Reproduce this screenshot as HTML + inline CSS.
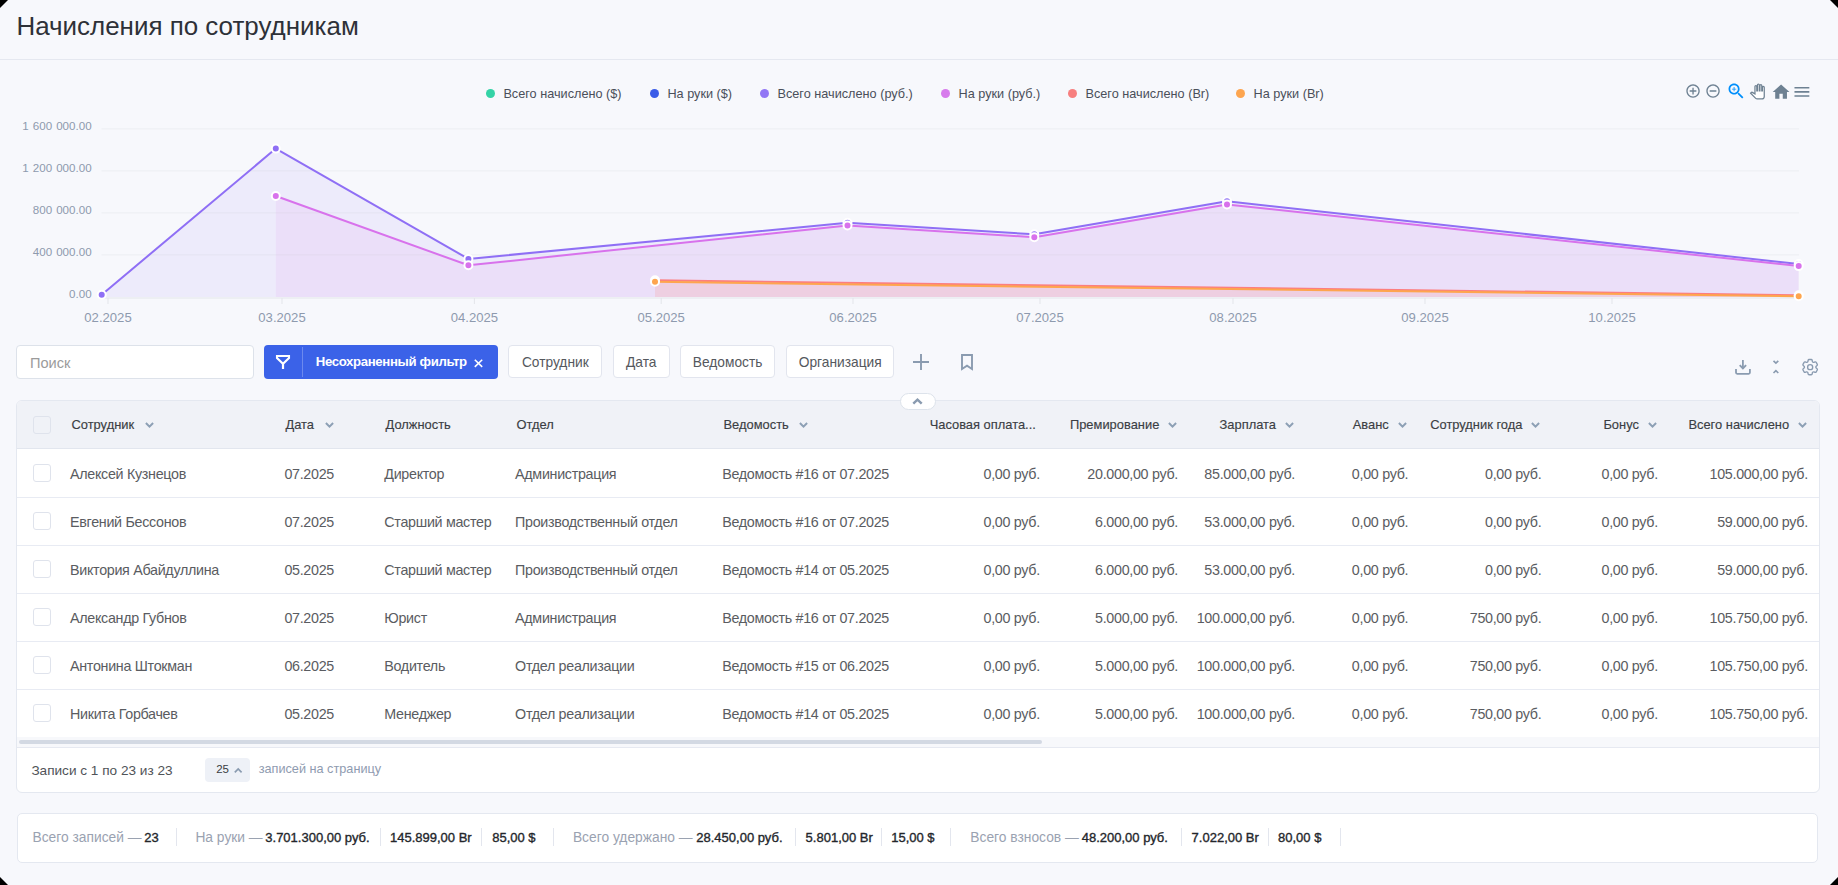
<!DOCTYPE html><html lang="ru"><head><meta charset="utf-8"><title>Начисления по сотрудникам</title>
<style>
html,body{margin:0;padding:0;}
body{width:1838px;height:885px;overflow:hidden;background:#f7f8fc;position:relative;font-family:"Liberation Sans", sans-serif;}
.t{position:absolute;line-height:20px;white-space:nowrap;}
.md{-webkit-text-stroke:0.15px currentColor;}
.sb{-webkit-text-stroke:0.35px currentColor;}
.box{position:absolute;box-sizing:border-box;}
.corner{position:absolute;width:8px;height:8px;}
svg{position:absolute;overflow:visible;}
</style></head><body>

<div class="corner" style="left:0;top:0;background:linear-gradient(135deg,#000 0,#000 45%,rgba(0,0,0,0) 55%)"></div>
<div class="corner" style="right:0;top:0;background:linear-gradient(225deg,#000 0,#000 45%,rgba(0,0,0,0) 55%)"></div>
<div class="corner" style="left:0;bottom:0;background:linear-gradient(45deg,#000 0,#000 45%,rgba(0,0,0,0) 55%)"></div>
<div class="corner" style="right:0;bottom:0;background:linear-gradient(315deg,#000 0,#000 45%,rgba(0,0,0,0) 55%)"></div>
<div class="t " style="left:16.5px;top:16.1px;font-size:25.95px;color:#2e3138;">Начисления по сотрудникам</div>
<div class="box" style="left:0;top:59px;width:1838px;height:1px;background:#e5e8f0"></div>
<div class="box" style="left:485.8px;top:88.8px;width:9.2px;height:9.2px;border-radius:50%;background:#34d3a6"></div>
<div class="t " style="left:503.4px;top:83.5px;font-size:12.7px;color:#4a4f5a;">Всего начислено ($)</div>
<div class="box" style="left:649.8px;top:88.8px;width:9.2px;height:9.2px;border-radius:50%;background:#3a5ce8"></div>
<div class="t " style="left:667.4px;top:83.5px;font-size:12.7px;color:#4a4f5a;">На руки ($)</div>
<div class="box" style="left:759.9px;top:88.8px;width:9.2px;height:9.2px;border-radius:50%;background:#9277f5"></div>
<div class="t " style="left:777.5px;top:83.5px;font-size:12.7px;color:#4a4f5a;">Всего начислено (руб.)</div>
<div class="box" style="left:940.9px;top:88.8px;width:9.2px;height:9.2px;border-radius:50%;background:#d77bec"></div>
<div class="t " style="left:958.5px;top:83.5px;font-size:12.7px;color:#4a4f5a;">На руки (руб.)</div>
<div class="box" style="left:1067.9px;top:88.8px;width:9.2px;height:9.2px;border-radius:50%;background:#f77f7f"></div>
<div class="t " style="left:1085.5px;top:83.5px;font-size:12.7px;color:#4a4f5a;">Всего начислено (Br)</div>
<div class="box" style="left:1235.9px;top:88.8px;width:9.2px;height:9.2px;border-radius:50%;background:#fda54f"></div>
<div class="t " style="left:1253.5px;top:83.5px;font-size:12.7px;color:#4a4f5a;">На руки (Br)</div>
<svg style="left:1685.30px;top:83.30px" width="16.08" height="16.08" viewBox="0 0 24 24" ><path fill="#6e8192" d="M13 7h-2v4H7v2h4v4h2v-4h4v-2h-4V7zm-1-5C6.48 2 2 6.48 2 12s4.48 10 10 10 10-4.48 10-10S17.52 2 12 2zm0 18c-4.41 0-8-3.59-8-8s3.59-8 8-8 8 3.59 8 8-3.59 8-8 8z"/></svg>
<svg style="left:1705.10px;top:83.30px" width="16.08" height="16.08" viewBox="0 0 24 24" ><path fill="#6e8192" d="M7 11v2h10v-2H7zm5-9C6.48 2 2 6.48 2 12s4.48 10 10 10 10-4.48 10-10S17.52 2 12 2zm0 18c-4.41 0-8-3.59-8-8s3.59-8 8-8 8 3.59 8 8-3.59 8-8 8z"/></svg>
<svg style="left:1726.40px;top:81.10px" width="20.40" height="20.40" viewBox="0 0 24 24" ><path fill="#008ffb" d="M15.5 14h-.79l-.28-.27C15.41 12.59 16 11.11 16 9.5 16 5.91 13.09 3 9.5 3S3 5.91 3 9.5 5.91 16 9.5 16c1.61 0 3.09-.59 4.23-1.57l.27.28v.79l5 4.99L20.49 19l-4.99-5zm-6 0C7.01 14 5 11.99 5 9.5S7.01 5 9.5 5 14 7.01 14 9.5 11.99 14 9.5 14z"/><path fill="#008ffb" d="M12 10h-2v2H9v-2H7V9h2V7h1v2h2v1z"/></svg>
<svg style="left:1750.00px;top:84.10px" width="14.88" height="14.88" viewBox="0 0 24 24" ><path fill="#fff" stroke="#6e8192" stroke-width="2" d="M23 5.5V20c0 2.2-1.8 4-4 4h-7.3c-1.08 0-2.1-.43-2.85-1.19L1 14.83s1.26-1.23 1.3-1.25c.22-.19.49-.29.79-.29.22 0 .42.06.6.16.04.01 4.31 2.46 4.31 2.46V4c0-.83.67-1.5 1.5-1.5S11 3.17 11 4v7h1V1.5c0-.83.67-1.5 1.5-1.5S15 .67 15 1.5V11h1V2.5c0-.83.67-1.5 1.5-1.5s1.5.67 1.5 1.5V11h1V5.5c0-.83.67-1.5 1.5-1.5s1.5.67 1.5 1.5z"/></svg>
<svg style="left:1771.30px;top:81.80px" width="20.16" height="20.16" viewBox="0 0 24 24" ><path fill="#6e8192" d="M10 20v-6h4v6h5v-8h3L12 3 2 12h3v8z"/></svg>
<svg style="left:1791.60px;top:82.00px" width="19.80" height="19.80" viewBox="0 0 24 24" ><path fill="#6e8192" d="M3 18h18v-2H3v2zm0-5h18v-2H3v2zm0-7v2h18V6H3z"/></svg>
<div class="t " style="right:1746.4px;top:116.0px;font-size:11.6px;color:#8e9aae;word-spacing:0.8px;">1 600 000.00</div>
<div class="t " style="right:1746.4px;top:158.1px;font-size:11.6px;color:#8e9aae;word-spacing:0.8px;">1 200 000.00</div>
<div class="t " style="right:1746.4px;top:200.1px;font-size:11.6px;color:#8e9aae;word-spacing:0.8px;">800 000.00</div>
<div class="t " style="right:1746.4px;top:242.1px;font-size:11.6px;color:#8e9aae;word-spacing:0.8px;">400 000.00</div>
<div class="t " style="right:1746.4px;top:284.1px;font-size:11.6px;color:#8e9aae;word-spacing:0.8px;">0.00</div>
<div class="t " style="left:-192.0px;width:600px;text-align:center;top:307.6px;font-size:13.1px;color:#8e9aae;">02.2025</div>
<div class="t " style="left:-18.0px;width:600px;text-align:center;top:307.6px;font-size:13.1px;color:#8e9aae;">03.2025</div>
<div class="t " style="left:174.4px;width:600px;text-align:center;top:307.6px;font-size:13.1px;color:#8e9aae;">04.2025</div>
<div class="t " style="left:361.2px;width:600px;text-align:center;top:307.6px;font-size:13.1px;color:#8e9aae;">05.2025</div>
<div class="t " style="left:553.0px;width:600px;text-align:center;top:307.6px;font-size:13.1px;color:#8e9aae;">06.2025</div>
<div class="t " style="left:740.0px;width:600px;text-align:center;top:307.6px;font-size:13.1px;color:#8e9aae;">07.2025</div>
<div class="t " style="left:933.0px;width:600px;text-align:center;top:307.6px;font-size:13.1px;color:#8e9aae;">08.2025</div>
<div class="t " style="left:1125.0px;width:600px;text-align:center;top:307.6px;font-size:13.1px;color:#8e9aae;">09.2025</div>
<div class="t " style="left:1312.0px;width:600px;text-align:center;top:307.6px;font-size:13.1px;color:#8e9aae;">10.2025</div>
<svg style="left:0;top:0" width="1838" height="340" viewBox="0 0 1838 340">
<line x1="101.5" y1="128.9" x2="1799" y2="128.9" stroke="#eceef2" stroke-width="1"/>
<line x1="101.5" y1="170.9" x2="1799" y2="170.9" stroke="#eceef2" stroke-width="1"/>
<line x1="101.5" y1="212.9" x2="1799" y2="212.9" stroke="#eceef2" stroke-width="1"/>
<line x1="101.5" y1="254.9" x2="1799" y2="254.9" stroke="#eceef2" stroke-width="1"/>
<line x1="101.5" y1="298" x2="1799" y2="298" stroke="#e3e5ea" stroke-width="1.2"/>
<line x1="108" y1="298" x2="108" y2="304" stroke="#e3e5ea" stroke-width="1"/>
<line x1="282" y1="298" x2="282" y2="304" stroke="#e3e5ea" stroke-width="1"/>
<line x1="474.4" y1="298" x2="474.4" y2="304" stroke="#e3e5ea" stroke-width="1"/>
<line x1="661.2" y1="298" x2="661.2" y2="304" stroke="#e3e5ea" stroke-width="1"/>
<line x1="853" y1="298" x2="853" y2="304" stroke="#e3e5ea" stroke-width="1"/>
<line x1="1040" y1="298" x2="1040" y2="304" stroke="#e3e5ea" stroke-width="1"/>
<line x1="1233" y1="298" x2="1233" y2="304" stroke="#e3e5ea" stroke-width="1"/>
<line x1="1425" y1="298" x2="1425" y2="304" stroke="#e3e5ea" stroke-width="1"/>
<line x1="1612" y1="298" x2="1612" y2="304" stroke="#e3e5ea" stroke-width="1"/>
<polygon points="101.7,297.0 101.7,294.7 275.8,148.6 468.4,258.9 847.5,222.8 1034.3,234.3 1227,201.3 1798.7,264 1798.7,297.0" fill="#8f6ff5" fill-opacity="0.09"/>
<polygon points="275.8,297.0 275.8,196 468.4,265.3 847.5,225.4 1034.3,237.2 1227,204.4 1798.7,266.1 1798.7,297.0" fill="#e070ec" fill-opacity="0.09"/>
<polygon points="655,297.0 655,280.3 1798.7,295.2 1798.7,297.0" fill="#fc7e80" fill-opacity="0.12"/>
<polygon points="655,297.0 655,281.8 1798.7,296.3 1798.7,297.0" fill="#fea54e" fill-opacity="0.06"/>
<polyline points="101.7,294.7 275.8,148.6 468.4,258.9 847.5,222.8 1034.3,234.3 1227,201.3 1798.7,264" fill="none" stroke="#8f6ff5" stroke-width="2" stroke-linejoin="round"/>
<polyline points="275.8,196 468.4,265.3 847.5,225.4 1034.3,237.2 1227,204.4 1798.7,266.1" fill="none" stroke="#d872ec" stroke-width="2" stroke-linejoin="round"/>
<polyline points="655,280.3 1798.7,295.2" fill="none" stroke="#fc7e80" stroke-width="2" stroke-linejoin="round"/>
<polyline points="655,281.8 1798.7,296.3" fill="none" stroke="#fea54e" stroke-width="2" stroke-linejoin="round"/>
<circle cx="101.7" cy="294.7" r="4.0" fill="#8f6ff5" stroke="#fff" stroke-width="2"/>
<circle cx="275.8" cy="148.6" r="4.0" fill="#8f6ff5" stroke="#fff" stroke-width="2"/>
<circle cx="468.4" cy="258.9" r="4.0" fill="#8f6ff5" stroke="#fff" stroke-width="2"/>
<circle cx="847.5" cy="222.8" r="4.0" fill="#8f6ff5" stroke="#fff" stroke-width="2"/>
<circle cx="1034.3" cy="234.3" r="4.0" fill="#8f6ff5" stroke="#fff" stroke-width="2"/>
<circle cx="1227" cy="201.3" r="4.0" fill="#8f6ff5" stroke="#fff" stroke-width="2"/>
<circle cx="1798.7" cy="264" r="4.0" fill="#8f6ff5" stroke="#fff" stroke-width="2"/>
<circle cx="275.8" cy="196" r="4.0" fill="#d872ec" stroke="#fff" stroke-width="2"/>
<circle cx="468.4" cy="265.3" r="4.0" fill="#d872ec" stroke="#fff" stroke-width="2"/>
<circle cx="847.5" cy="225.4" r="4.0" fill="#d872ec" stroke="#fff" stroke-width="2"/>
<circle cx="1034.3" cy="237.2" r="4.0" fill="#d872ec" stroke="#fff" stroke-width="2"/>
<circle cx="1227" cy="204.4" r="4.0" fill="#d872ec" stroke="#fff" stroke-width="2"/>
<circle cx="1798.7" cy="266.1" r="4.0" fill="#d872ec" stroke="#fff" stroke-width="2"/>
<circle cx="655" cy="280.3" r="4.0" fill="#fc7e80" stroke="#fff" stroke-width="2"/>
<circle cx="655" cy="281.8" r="4.0" fill="#fea54e" stroke="#fff" stroke-width="2"/>
<circle cx="1798.7" cy="295.2" r="4.0" fill="#fc7e80" stroke="#fff" stroke-width="2"/>
<circle cx="1798.7" cy="296.3" r="4.0" fill="#fea54e" stroke="#fff" stroke-width="2"/>
</svg>
<div class="box" style="left:16px;top:345px;width:237.5px;height:34px;background:#fff;border:1px solid #dde2ea;border-radius:4px"></div>
<div class="t " style="left:29.9px;top:353.1px;font-size:14.6px;color:#9b9b9b;">Поиск</div>
<div class="box" style="left:264px;top:345px;width:234px;height:34px;background:#3b62e8;border-radius:4px"></div>
<div class="box" style="left:302px;top:347px;width:1px;height:30px;background:rgba(255,255,255,0.25)"></div>
<svg style="left:270px;top:350px" width="30" height="25" viewBox="270 350 30 25"><path d="M277 358V356H289V358L283 363.8Z" fill="none" stroke="#fff" stroke-width="2.1" stroke-linejoin="miter"/><path d="M283 363V369" stroke="#fff" stroke-width="2.2"/></svg>
<div class="t " style="left:315.8px;top:352.3px;font-size:13.2px;color:#ffffff;font-weight:700;letter-spacing:-0.36px;">Несохраненный фильтр</div>
<svg style="left:474px;top:358.6px" width="9" height="8.6" viewBox="0 0 9 8.6"><path d="M0.8 0.7L8.2 7.9M8.2 0.7L0.8 7.9" stroke="#fff" stroke-width="1.6"/></svg>
<div class="box" style="left:508.2px;top:345.4px;width:94.2px;height:33px;background:#fff;border:1px solid #e2e5ee;border-radius:4px"></div>
<div class="t " style="left:255.3px;width:600px;text-align:center;top:352.6px;font-size:13.75px;color:#55585d;">Сотрудник</div>
<div class="box" style="left:613.0px;top:345.4px;width:56.6px;height:33px;background:#fff;border:1px solid #e2e5ee;border-radius:4px"></div>
<div class="t " style="left:341.3px;width:600px;text-align:center;top:352.6px;font-size:13.75px;color:#55585d;">Дата</div>
<div class="box" style="left:680.0px;top:345.4px;width:95.2px;height:33px;background:#fff;border:1px solid #e2e5ee;border-radius:4px"></div>
<div class="t " style="left:427.6px;width:600px;text-align:center;top:352.6px;font-size:13.75px;color:#55585d;">Ведомость</div>
<div class="box" style="left:786.0px;top:345.4px;width:108.4px;height:33px;background:#fff;border:1px solid #e2e5ee;border-radius:4px"></div>
<div class="t " style="left:540.2px;width:600px;text-align:center;top:352.6px;font-size:13.75px;color:#55585d;">Организация</div>
<svg style="left:913px;top:354px" width="16" height="16" viewBox="0 0 16 16"><path d="M8 0v16M0 8h16" stroke="#8a9bb0" stroke-width="1.9"/></svg>
<svg style="left:961px;top:354px" width="12" height="16" viewBox="0 0 12 16"><path d="M1 15V1h10v14L6 11.6z" fill="none" stroke="#8a9bb0" stroke-width="1.9" stroke-linejoin="miter"/></svg>
<svg style="left:1730px;top:355px" width="26" height="24" viewBox="1730 355 26 24"><path d="M1736 369.1V372.6Q1736 373.8 1737.2 373.8H1748.7Q1749.9 373.8 1749.9 372.6V369.1" fill="none" stroke="#8a9bb0" stroke-width="1.8"/><path d="M1742.9 360V368.4" stroke="#8a9bb0" stroke-width="1.8"/><path d="M1739.7 365.1L1742.9 368.3 1746.1 365.1" fill="none" stroke="#8a9bb0" stroke-width="1.9"/></svg>
<svg style="left:1768px;top:355px" width="16" height="24" viewBox="1768 355 16 24"><path d="M1773.5 360.9L1775.9 363.2 1778.3 360.9M1773.5 373L1775.9 370.7 1778.3 373" fill="none" stroke="#8a9bb0" stroke-width="1.65"/></svg>
<svg style="left:1799.85px;top:356.8px" width="20.3" height="20.3" viewBox="0 0 24 24"><g fill="none" stroke="#8a9bb0" stroke-width="1.6" stroke-linecap="round" stroke-linejoin="round"><path d="M9.594 3.94c.09-.542.56-.94 1.11-.94h2.593c.55 0 1.02.398 1.11.94l.213 1.281c.063.374.313.686.645.87.074.04.147.083.22.127.325.196.72.257 1.075.124l1.217-.456a1.125 1.125 0 0 1 1.37.49l1.296 2.247a1.125 1.125 0 0 1-.26 1.431l-1.003.827c-.293.241-.438.613-.43.992a7.723 7.723 0 0 1 0 .255c-.008.378.137.75.43.991l1.004.827c.424.35.534.955.26 1.43l-1.298 2.247a1.125 1.125 0 0 1-1.369.491l-1.217-.456c-.355-.133-.75-.072-1.076.124a6.47 6.47 0 0 1-.22.128c-.331.183-.581.495-.644.869l-.213 1.281c-.09.543-.56.94-1.11.94h-2.594c-.55 0-1.019-.398-1.11-.94l-.213-1.281c-.062-.374-.312-.686-.644-.87a6.52 6.52 0 0 1-.22-.127c-.325-.196-.72-.257-1.076-.124l-1.217.456a1.125 1.125 0 0 1-1.369-.49l-1.297-2.247a1.125 1.125 0 0 1 .26-1.431l1.004-.827c.292-.24.437-.613.43-.991a6.932 6.932 0 0 1 0-.255c.007-.38-.138-.751-.43-.992l-1.004-.827a1.125 1.125 0 0 1-.26-1.43l1.297-2.247a1.125 1.125 0 0 1 1.37-.491l1.216.456c.356.133.751.072 1.076-.124.072-.044.146-.086.22-.128.332-.183.582-.495.644-.869l.214-1.28Z"/><path d="M15 12a3 3 0 1 1-6 0 3 3 0 0 1 6 0Z"/></g></svg>
<div class="box" style="left:15.5px;top:400.3px;width:1804.5px;height:392.7px;background:#fff;border:1px solid #e4e8f0;border-radius:6px;overflow:hidden"><div style="position:absolute;left:0;top:0;right:0;height:46.6px;background:#f0f2f7;border-bottom:1px solid #e2e6ee"></div></div>
<div class="box" style="left:16.5px;top:497px;width:1802.5px;height:1px;background:#e8ebf3"></div>
<div class="box" style="left:16.5px;top:545px;width:1802.5px;height:1px;background:#e8ebf3"></div>
<div class="box" style="left:16.5px;top:593px;width:1802.5px;height:1px;background:#e8ebf3"></div>
<div class="box" style="left:16.5px;top:641px;width:1802.5px;height:1px;background:#e8ebf3"></div>
<div class="box" style="left:16.5px;top:689px;width:1802.5px;height:1px;background:#e8ebf3"></div>
<div class="box" style="left:16.5px;top:737px;width:1802.5px;height:9.6px;background:#f7f8fb"></div>
<div class="box" style="left:18.9px;top:739.8px;width:1023px;height:4.4px;background:#d3d9e3;border-radius:3px"></div>
<div class="box" style="left:16.5px;top:746.6px;width:1802.5px;height:1px;background:#e6e9f1"></div>
<div class="box" style="left:900.2px;top:393.1px;width:35.7px;height:16.6px;background:#fff;border:1px solid #dde3eb;border-radius:9px"></div>
<svg style="left:912px;top:398px" width="11" height="7" viewBox="0 0 11 7"><path d="M1.3 5.7L5.5 1.6 9.7 5.7" fill="none" stroke="#8a9bb0" stroke-width="2.4"/></svg>
<div class="box" style="left:33.1px;top:416.4px;width:17.8px;height:17.4px;background:#f0f2f7;border:1px solid #dfe3ec;border-radius:3px"></div>
<div class="t md" style="left:71.5px;top:415.0px;font-size:12.9px;color:#3b3e44;">Сотрудник</div>
<svg style="left:145.2px;top:422.0px" width="9" height="6" viewBox="0 0 9 6"><path d="M0.9 1L4.5 4.6 8.1 1" fill="none" stroke="#8da0b5" stroke-width="2"/></svg>
<div class="t md" style="left:285.5px;top:415.0px;font-size:12.9px;color:#3b3e44;">Дата</div>
<svg style="left:325.3px;top:422.0px" width="9" height="6" viewBox="0 0 9 6"><path d="M0.9 1L4.5 4.6 8.1 1" fill="none" stroke="#8da0b5" stroke-width="2"/></svg>
<div class="t md" style="left:385.5px;top:415.0px;font-size:12.9px;color:#3b3e44;">Должность</div>
<div class="t md" style="left:516.5px;top:415.0px;font-size:12.9px;color:#3b3e44;">Отдел</div>
<div class="t md" style="left:723.5px;top:415.0px;font-size:12.9px;color:#3b3e44;">Ведомость</div>
<svg style="left:798.9px;top:422.0px" width="9" height="6" viewBox="0 0 9 6"><path d="M0.9 1L4.5 4.6 8.1 1" fill="none" stroke="#8da0b5" stroke-width="2"/></svg>
<div class="t md" style="right:802.2px;top:415.0px;font-size:12.9px;color:#3b3e44;">Часовая оплата...</div>
<div class="t md" style="right:678.7px;top:415.0px;font-size:12.9px;color:#3b3e44;">Премирование</div>
<svg style="left:1168.0px;top:422.0px" width="9" height="6" viewBox="0 0 9 6"><path d="M0.9 1L4.5 4.6 8.1 1" fill="none" stroke="#8da0b5" stroke-width="2"/></svg>
<div class="t md" style="right:562.0px;top:415.0px;font-size:12.9px;color:#3b3e44;">Зарплата</div>
<svg style="left:1285.2px;top:422.0px" width="9" height="6" viewBox="0 0 9 6"><path d="M0.9 1L4.5 4.6 8.1 1" fill="none" stroke="#8da0b5" stroke-width="2"/></svg>
<div class="t md" style="right:449.3px;top:415.0px;font-size:12.9px;color:#3b3e44;">Аванс</div>
<svg style="left:1398.0px;top:422.0px" width="9" height="6" viewBox="0 0 9 6"><path d="M0.9 1L4.5 4.6 8.1 1" fill="none" stroke="#8da0b5" stroke-width="2"/></svg>
<div class="t md" style="right:315.6px;top:415.0px;font-size:12.9px;color:#3b3e44;">Сотрудник года</div>
<svg style="left:1531.0px;top:422.0px" width="9" height="6" viewBox="0 0 9 6"><path d="M0.9 1L4.5 4.6 8.1 1" fill="none" stroke="#8da0b5" stroke-width="2"/></svg>
<div class="t md" style="right:199.1px;top:415.0px;font-size:12.9px;color:#3b3e44;">Бонус</div>
<svg style="left:1647.6px;top:422.0px" width="9" height="6" viewBox="0 0 9 6"><path d="M0.9 1L4.5 4.6 8.1 1" fill="none" stroke="#8da0b5" stroke-width="2"/></svg>
<div class="t md" style="right:48.9px;top:415.0px;font-size:12.9px;color:#3b3e44;">Всего начислено</div>
<svg style="left:1797.7px;top:422.0px" width="9" height="6" viewBox="0 0 9 6"><path d="M0.9 1L4.5 4.6 8.1 1" fill="none" stroke="#8da0b5" stroke-width="2"/></svg>
<div class="box" style="left:33.1px;top:464.4px;width:17.8px;height:17.4px;background:#fff;border:1px solid #dfe3ec;border-radius:3px"></div>
<div class="t " style="left:70.0px;top:463.8px;font-size:14.3px;color:#5a5c61;letter-spacing:-0.3px;">Алексей Кузнецов</div>
<div class="t " style="left:284.4px;top:463.8px;font-size:14.3px;color:#5a5c61;letter-spacing:-0.3px;">07.2025</div>
<div class="t " style="left:384.3px;top:463.8px;font-size:14.3px;color:#5a5c61;letter-spacing:-0.3px;">Директор</div>
<div class="t " style="left:515.1px;top:463.8px;font-size:14.3px;color:#5a5c61;letter-spacing:-0.3px;">Администрация</div>
<div class="t " style="left:722.2px;top:463.8px;font-size:14.3px;color:#5a5c61;letter-spacing:-0.3px;">Ведомость #16 от 07.2025</div>
<div class="t " style="right:798.1px;top:463.8px;font-size:14.3px;color:#5a5c61;letter-spacing:-0.3px;">0,00 руб.</div>
<div class="t " style="right:660.0px;top:463.8px;font-size:14.3px;color:#5a5c61;letter-spacing:-0.3px;">20.000,00 руб.</div>
<div class="t " style="right:543.0px;top:463.8px;font-size:14.3px;color:#5a5c61;letter-spacing:-0.3px;">85.000,00 руб.</div>
<div class="t " style="right:429.8px;top:463.8px;font-size:14.3px;color:#5a5c61;letter-spacing:-0.3px;">0,00 руб.</div>
<div class="t " style="right:296.6px;top:463.8px;font-size:14.3px;color:#5a5c61;letter-spacing:-0.3px;">0,00 руб.</div>
<div class="t " style="right:180.1px;top:463.8px;font-size:14.3px;color:#5a5c61;letter-spacing:-0.3px;">0,00 руб.</div>
<div class="t " style="right:30.2px;top:463.8px;font-size:14.3px;color:#5a5c61;letter-spacing:-0.3px;">105.000,00 руб.</div>
<div class="box" style="left:33.1px;top:512.4px;width:17.8px;height:17.4px;background:#fff;border:1px solid #dfe3ec;border-radius:3px"></div>
<div class="t " style="left:70.0px;top:511.8px;font-size:14.3px;color:#5a5c61;letter-spacing:-0.3px;">Евгений Бессонов</div>
<div class="t " style="left:284.4px;top:511.8px;font-size:14.3px;color:#5a5c61;letter-spacing:-0.3px;">07.2025</div>
<div class="t " style="left:384.3px;top:511.8px;font-size:14.3px;color:#5a5c61;letter-spacing:-0.3px;">Старший мастер</div>
<div class="t " style="left:515.1px;top:511.8px;font-size:14.3px;color:#5a5c61;letter-spacing:-0.3px;">Производственный отдел</div>
<div class="t " style="left:722.2px;top:511.8px;font-size:14.3px;color:#5a5c61;letter-spacing:-0.3px;">Ведомость #16 от 07.2025</div>
<div class="t " style="right:798.1px;top:511.8px;font-size:14.3px;color:#5a5c61;letter-spacing:-0.3px;">0,00 руб.</div>
<div class="t " style="right:660.0px;top:511.8px;font-size:14.3px;color:#5a5c61;letter-spacing:-0.3px;">6.000,00 руб.</div>
<div class="t " style="right:543.0px;top:511.8px;font-size:14.3px;color:#5a5c61;letter-spacing:-0.3px;">53.000,00 руб.</div>
<div class="t " style="right:429.8px;top:511.8px;font-size:14.3px;color:#5a5c61;letter-spacing:-0.3px;">0,00 руб.</div>
<div class="t " style="right:296.6px;top:511.8px;font-size:14.3px;color:#5a5c61;letter-spacing:-0.3px;">0,00 руб.</div>
<div class="t " style="right:180.1px;top:511.8px;font-size:14.3px;color:#5a5c61;letter-spacing:-0.3px;">0,00 руб.</div>
<div class="t " style="right:30.2px;top:511.8px;font-size:14.3px;color:#5a5c61;letter-spacing:-0.3px;">59.000,00 руб.</div>
<div class="box" style="left:33.1px;top:560.4px;width:17.8px;height:17.4px;background:#fff;border:1px solid #dfe3ec;border-radius:3px"></div>
<div class="t " style="left:70.0px;top:559.8px;font-size:14.3px;color:#5a5c61;letter-spacing:-0.3px;">Виктория Абайдуллина</div>
<div class="t " style="left:284.4px;top:559.8px;font-size:14.3px;color:#5a5c61;letter-spacing:-0.3px;">05.2025</div>
<div class="t " style="left:384.3px;top:559.8px;font-size:14.3px;color:#5a5c61;letter-spacing:-0.3px;">Старший мастер</div>
<div class="t " style="left:515.1px;top:559.8px;font-size:14.3px;color:#5a5c61;letter-spacing:-0.3px;">Производственный отдел</div>
<div class="t " style="left:722.2px;top:559.8px;font-size:14.3px;color:#5a5c61;letter-spacing:-0.3px;">Ведомость #14 от 05.2025</div>
<div class="t " style="right:798.1px;top:559.8px;font-size:14.3px;color:#5a5c61;letter-spacing:-0.3px;">0,00 руб.</div>
<div class="t " style="right:660.0px;top:559.8px;font-size:14.3px;color:#5a5c61;letter-spacing:-0.3px;">6.000,00 руб.</div>
<div class="t " style="right:543.0px;top:559.8px;font-size:14.3px;color:#5a5c61;letter-spacing:-0.3px;">53.000,00 руб.</div>
<div class="t " style="right:429.8px;top:559.8px;font-size:14.3px;color:#5a5c61;letter-spacing:-0.3px;">0,00 руб.</div>
<div class="t " style="right:296.6px;top:559.8px;font-size:14.3px;color:#5a5c61;letter-spacing:-0.3px;">0,00 руб.</div>
<div class="t " style="right:180.1px;top:559.8px;font-size:14.3px;color:#5a5c61;letter-spacing:-0.3px;">0,00 руб.</div>
<div class="t " style="right:30.2px;top:559.8px;font-size:14.3px;color:#5a5c61;letter-spacing:-0.3px;">59.000,00 руб.</div>
<div class="box" style="left:33.1px;top:608.4px;width:17.8px;height:17.4px;background:#fff;border:1px solid #dfe3ec;border-radius:3px"></div>
<div class="t " style="left:70.0px;top:607.8px;font-size:14.3px;color:#5a5c61;letter-spacing:-0.3px;">Александр Губнов</div>
<div class="t " style="left:284.4px;top:607.8px;font-size:14.3px;color:#5a5c61;letter-spacing:-0.3px;">07.2025</div>
<div class="t " style="left:384.3px;top:607.8px;font-size:14.3px;color:#5a5c61;letter-spacing:-0.3px;">Юрист</div>
<div class="t " style="left:515.1px;top:607.8px;font-size:14.3px;color:#5a5c61;letter-spacing:-0.3px;">Администрация</div>
<div class="t " style="left:722.2px;top:607.8px;font-size:14.3px;color:#5a5c61;letter-spacing:-0.3px;">Ведомость #16 от 07.2025</div>
<div class="t " style="right:798.1px;top:607.8px;font-size:14.3px;color:#5a5c61;letter-spacing:-0.3px;">0,00 руб.</div>
<div class="t " style="right:660.0px;top:607.8px;font-size:14.3px;color:#5a5c61;letter-spacing:-0.3px;">5.000,00 руб.</div>
<div class="t " style="right:543.0px;top:607.8px;font-size:14.3px;color:#5a5c61;letter-spacing:-0.3px;">100.000,00 руб.</div>
<div class="t " style="right:429.8px;top:607.8px;font-size:14.3px;color:#5a5c61;letter-spacing:-0.3px;">0,00 руб.</div>
<div class="t " style="right:296.6px;top:607.8px;font-size:14.3px;color:#5a5c61;letter-spacing:-0.3px;">750,00 руб.</div>
<div class="t " style="right:180.1px;top:607.8px;font-size:14.3px;color:#5a5c61;letter-spacing:-0.3px;">0,00 руб.</div>
<div class="t " style="right:30.2px;top:607.8px;font-size:14.3px;color:#5a5c61;letter-spacing:-0.3px;">105.750,00 руб.</div>
<div class="box" style="left:33.1px;top:656.4px;width:17.8px;height:17.4px;background:#fff;border:1px solid #dfe3ec;border-radius:3px"></div>
<div class="t " style="left:70.0px;top:655.8px;font-size:14.3px;color:#5a5c61;letter-spacing:-0.3px;">Антонина Штокман</div>
<div class="t " style="left:284.4px;top:655.8px;font-size:14.3px;color:#5a5c61;letter-spacing:-0.3px;">06.2025</div>
<div class="t " style="left:384.3px;top:655.8px;font-size:14.3px;color:#5a5c61;letter-spacing:-0.3px;">Водитель</div>
<div class="t " style="left:515.1px;top:655.8px;font-size:14.3px;color:#5a5c61;letter-spacing:-0.3px;">Отдел реализации</div>
<div class="t " style="left:722.2px;top:655.8px;font-size:14.3px;color:#5a5c61;letter-spacing:-0.3px;">Ведомость #15 от 06.2025</div>
<div class="t " style="right:798.1px;top:655.8px;font-size:14.3px;color:#5a5c61;letter-spacing:-0.3px;">0,00 руб.</div>
<div class="t " style="right:660.0px;top:655.8px;font-size:14.3px;color:#5a5c61;letter-spacing:-0.3px;">5.000,00 руб.</div>
<div class="t " style="right:543.0px;top:655.8px;font-size:14.3px;color:#5a5c61;letter-spacing:-0.3px;">100.000,00 руб.</div>
<div class="t " style="right:429.8px;top:655.8px;font-size:14.3px;color:#5a5c61;letter-spacing:-0.3px;">0,00 руб.</div>
<div class="t " style="right:296.6px;top:655.8px;font-size:14.3px;color:#5a5c61;letter-spacing:-0.3px;">750,00 руб.</div>
<div class="t " style="right:180.1px;top:655.8px;font-size:14.3px;color:#5a5c61;letter-spacing:-0.3px;">0,00 руб.</div>
<div class="t " style="right:30.2px;top:655.8px;font-size:14.3px;color:#5a5c61;letter-spacing:-0.3px;">105.750,00 руб.</div>
<div class="box" style="left:33.1px;top:704.4px;width:17.8px;height:17.4px;background:#fff;border:1px solid #dfe3ec;border-radius:3px"></div>
<div class="t " style="left:70.0px;top:703.8px;font-size:14.3px;color:#5a5c61;letter-spacing:-0.3px;">Никита Горбачев</div>
<div class="t " style="left:284.4px;top:703.8px;font-size:14.3px;color:#5a5c61;letter-spacing:-0.3px;">05.2025</div>
<div class="t " style="left:384.3px;top:703.8px;font-size:14.3px;color:#5a5c61;letter-spacing:-0.3px;">Менеджер</div>
<div class="t " style="left:515.1px;top:703.8px;font-size:14.3px;color:#5a5c61;letter-spacing:-0.3px;">Отдел реализации</div>
<div class="t " style="left:722.2px;top:703.8px;font-size:14.3px;color:#5a5c61;letter-spacing:-0.3px;">Ведомость #14 от 05.2025</div>
<div class="t " style="right:798.1px;top:703.8px;font-size:14.3px;color:#5a5c61;letter-spacing:-0.3px;">0,00 руб.</div>
<div class="t " style="right:660.0px;top:703.8px;font-size:14.3px;color:#5a5c61;letter-spacing:-0.3px;">5.000,00 руб.</div>
<div class="t " style="right:543.0px;top:703.8px;font-size:14.3px;color:#5a5c61;letter-spacing:-0.3px;">100.000,00 руб.</div>
<div class="t " style="right:429.8px;top:703.8px;font-size:14.3px;color:#5a5c61;letter-spacing:-0.3px;">0,00 руб.</div>
<div class="t " style="right:296.6px;top:703.8px;font-size:14.3px;color:#5a5c61;letter-spacing:-0.3px;">750,00 руб.</div>
<div class="t " style="right:180.1px;top:703.8px;font-size:14.3px;color:#5a5c61;letter-spacing:-0.3px;">0,00 руб.</div>
<div class="t " style="right:30.2px;top:703.8px;font-size:14.3px;color:#5a5c61;letter-spacing:-0.3px;">105.750,00 руб.</div>
<div class="t " style="left:31.4px;top:760.7px;font-size:13.6px;color:#505358;">Записи с 1 по 23 из 23</div>
<div class="box" style="left:205px;top:758px;width:45px;height:23.6px;background:#eef1f7;border-radius:4px"></div>
<div class="t " style="left:216.2px;top:758.8px;font-size:11.5px;color:#3a3d42;">25</div>
<svg style="left:233.8px;top:767.5px" width="8.4" height="5" viewBox="0 0 8.4 5"><path d="M0.8 4.3L4.2 0.9 7.6 4.3" fill="none" stroke="#8a9bb0" stroke-width="1.7"/></svg>
<div class="t " style="left:258.7px;top:759.1px;font-size:12.7px;color:#8f9bb0;">записей на страницу</div>
<div class="box" style="left:16.5px;top:813.4px;width:1801.5px;height:49.4px;background:#fff;border:1px solid #e4e8f0;border-radius:5px"></div>
<div class="t " style="left:32.5px;top:828.1px;font-size:13.8px;color:#9aa2b1;">Всего записей —</div>
<div class="t sb" style="left:144.2px;top:828.1px;font-size:13.0px;color:#23262b;">23</div>
<div class="box" style="left:175.9px;top:828px;width:1px;height:17.5px;background:#e3e6ee"></div>
<div class="t " style="left:195.4px;top:828.1px;font-size:13.8px;color:#9aa2b1;">На руки —</div>
<div class="t sb" style="left:265.3px;top:828.1px;font-size:13.0px;color:#23262b;">3.701.300,00 руб.</div>
<div class="box" style="left:379.8px;top:828px;width:1px;height:17.5px;background:#e3e6ee"></div>
<div class="t sb" style="left:390.0px;top:828.1px;font-size:13.0px;color:#23262b;">145.899,00 Br</div>
<div class="box" style="left:480.9px;top:828px;width:1px;height:17.5px;background:#e3e6ee"></div>
<div class="t sb" style="left:492.2px;top:828.1px;font-size:13.0px;color:#23262b;">85,00 $</div>
<div class="box" style="left:553.1px;top:828px;width:1px;height:17.5px;background:#e3e6ee"></div>
<div class="t " style="left:572.9px;top:828.1px;font-size:13.8px;color:#9aa2b1;">Всего удержано —</div>
<div class="t sb" style="left:696.3px;top:828.1px;font-size:13.0px;color:#23262b;">28.450,00 руб.</div>
<div class="box" style="left:794.7px;top:828px;width:1px;height:17.5px;background:#e3e6ee"></div>
<div class="t sb" style="left:805.6px;top:828.1px;font-size:13.0px;color:#23262b;">5.801,00 Br</div>
<div class="box" style="left:880.9px;top:828px;width:1px;height:17.5px;background:#e3e6ee"></div>
<div class="t sb" style="left:891.2px;top:828.1px;font-size:13.0px;color:#23262b;">15,00 $</div>
<div class="box" style="left:950.3px;top:828px;width:1px;height:17.5px;background:#e3e6ee"></div>
<div class="t " style="left:970.3px;top:828.1px;font-size:13.8px;color:#9aa2b1;">Всего взносов —</div>
<div class="t sb" style="left:1081.7px;top:828.1px;font-size:13.0px;color:#23262b;">48.200,00 руб.</div>
<div class="box" style="left:1181.3px;top:828px;width:1px;height:17.5px;background:#e3e6ee"></div>
<div class="t sb" style="left:1191.6px;top:828.1px;font-size:13.0px;color:#23262b;">7.022,00 Br</div>
<div class="box" style="left:1268.3px;top:828px;width:1px;height:17.5px;background:#e3e6ee"></div>
<div class="t sb" style="left:1278.0px;top:828.1px;font-size:13.0px;color:#23262b;">80,00 $</div>
<div class="box" style="left:1340.1px;top:828px;width:1px;height:17.5px;background:#e3e6ee"></div>
</body></html>
